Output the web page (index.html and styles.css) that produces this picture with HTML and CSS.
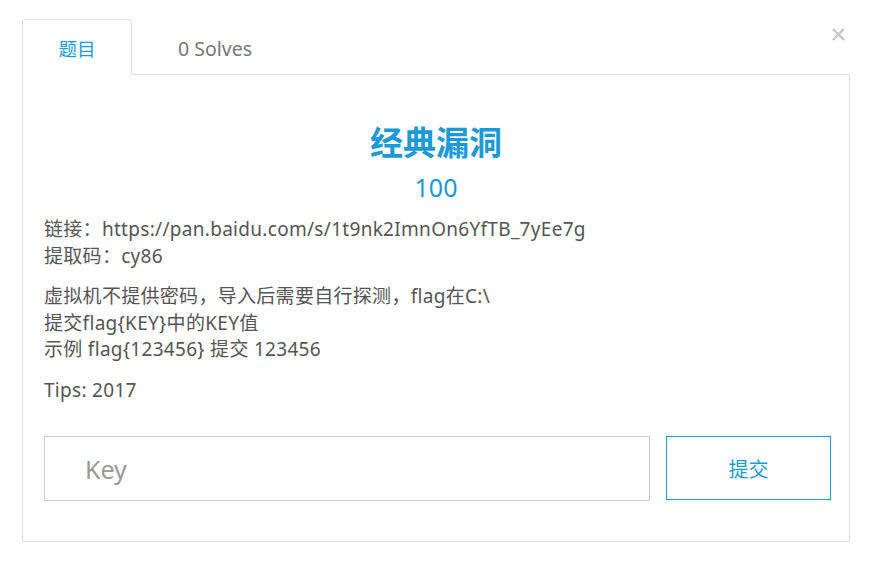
FILE: index.html
```html
<!DOCTYPE html>
<html lang="zh">
<head>
<meta charset="utf-8">
<title>经典漏洞</title>
<link rel="stylesheet" href="styles.css">
</head>
<body>
<div class="modal">
  <button class="close" aria-label="Close">
    <svg width="13" height="13" viewBox="0 0 13 13"><path d="M1 1L12 12M12 1L1 12" stroke="#c6c6c6" stroke-width="2.4" stroke-linecap="butt"/></svg>
  </button>
  <ul class="tabs">
    <li class="tab active">题目</li>
    <li class="tab">0 Solves</li>
  </ul>
  <div class="panel">
    <h2 class="title">经典漏洞</h2>
    <div class="value">100</div>
    <div class="desc">
      <p>链接：https://pan.baidu.com/s/1t9nk2ImnOn6YfTB_7yEe7g<br>提取码：cy86</p>
      <p>虚拟机不提供密码，导入后需要自行探测，flag在C:\<br>提交flag{KEY}中的KEY值<br>示例 flag{123456} 提交 123456</p>
      <p>Tips: 2017</p>
    </div>
    <form class="submit-row">
      <input class="key" type="text" placeholder="Key">
      <button class="submit" type="button">提交</button>
    </form>
  </div>
</div>
</body>
</html>
```

FILE: styles.css
```css
* { box-sizing: border-box; }
html, body { margin: 0; padding: 0; background: #fff; }
body {
  font-family: "Noto Sans", "Noto Sans CJK SC", sans-serif;
  color: #555;
  width: 869px;
  height: 566px;
  overflow: hidden;
}
.modal {
  position: relative;
  margin: 19px 0 0 22px;
  width: 828px;
}
.close {
  position: absolute;
  left: 810px;
  top: 9px;
  border: 0;
  background: none;
  padding: 0;
  width: 13px;
  height: 13px;
  cursor: pointer;
}
.close svg { display: block; }
.tabs {
  list-style: none;
  margin: 0;
  padding: 0;
  display: flex;
  height: 56px;
  border-bottom: 1px solid #ddd;
}
.tab {
  height: 56px;
  display: flex;
  align-items: center;
  justify-content: center;
  font-size: 19px;
  color: #777;
  padding-top: 2px;
}
.tab.active {
  width: 110px;
  color: #1b9ad7;
  background: #fff;
  border: 1px solid #ddd;
  border-bottom-color: #fff;
  border-radius: 4px 4px 0 0;
  font-size: 18.5px;
}
.tab:not(.active) {
  padding-left: 46px;
  padding-right: 20px;
  font-size: 19.5px;
}
.panel {
  border: 1px solid #ddd;
  border-top: 0;
  height: 467px;
  padding: 48px 21px 0 21px;
}
.title {
  margin: 0;
  text-align: center;
  font-size: 33px;
  line-height: 40px;
  font-weight: 700;
  color: #1b9ad7;
}
.value {
  margin-top: 9px;
  text-align: center;
  font-size: 25px;
  line-height: 30px;
  color: #1b9ad7;
}
.desc {
  margin-top: 14px;
  font-size: 19px;
  line-height: 26.5px;
  letter-spacing: 0.3px;
  color: #555;
}
.desc p { margin: 0 0 14px; }
.desc p:last-child { margin-bottom: 0; }
.submit-row {
  margin: 33px -3px 0 0;
  display: flex;
  gap: 16px;
}
.key {
  width: 606px;
  height: 65px;
  border: 1px solid #ccc;
  padding: 0 0 0 40px;
  font-family: inherit;
  font-size: 25px;
  color: #555;
  outline: none;
}
.key::placeholder { color: #999; }
.submit {
  width: 165px;
  height: 64px;
  border: 1px solid #1b9ad7;
  background: #fff;
  color: #1b9ad7;
  font-family: inherit;
  font-size: 20px;
  padding: 0;
  cursor: pointer;
}
```
